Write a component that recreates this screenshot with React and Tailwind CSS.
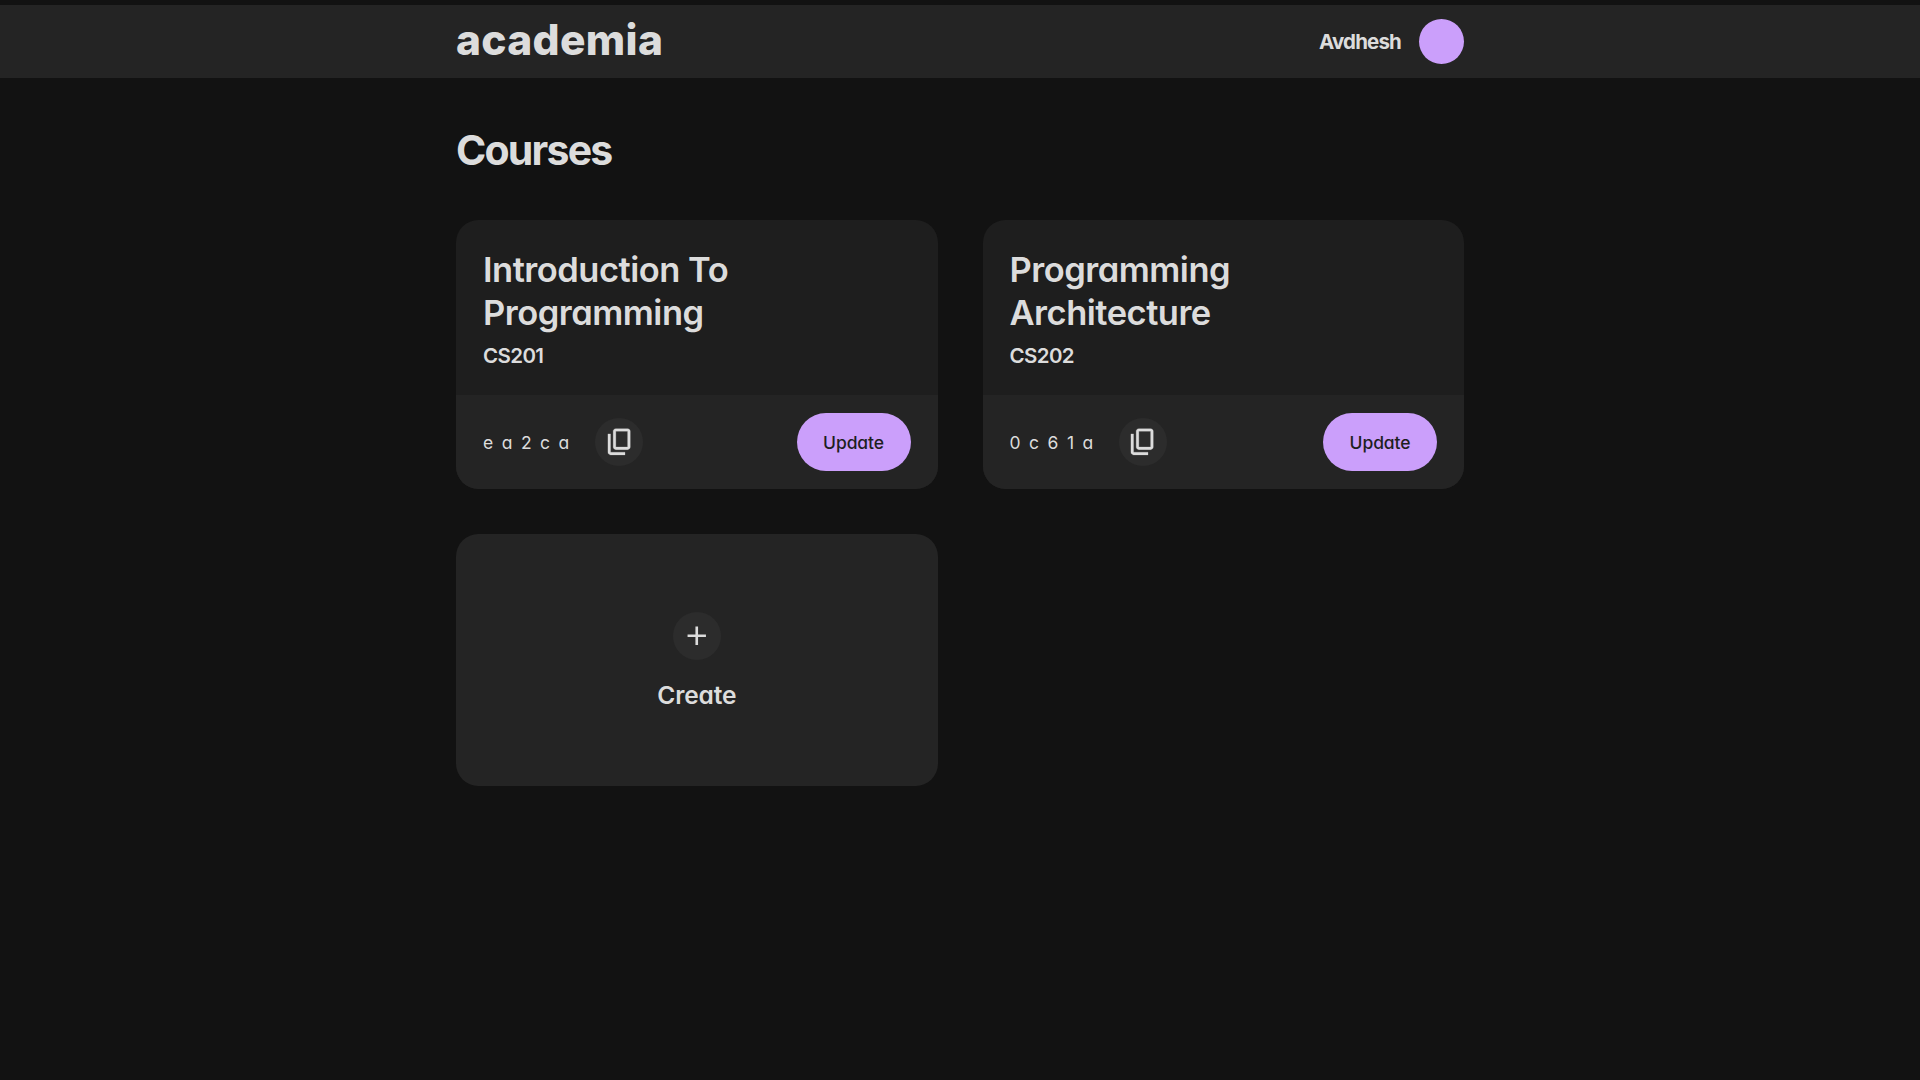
import React from 'react';

const courses = [
  { title: ['Introduction To', 'Programming'], id: 'CS201', code: 'ea2ca' },
  { title: ['Programming', 'Architecture'], id: 'CS202', code: '0c61a' },
];

function CopyIcon() {
  return (
    <svg viewBox="0 -960 960 960" className="size-[31.5px]" fill="currentColor" stroke="currentColor" strokeWidth="8">
      <path d="M360-240q-33 0-56.5-23.5T280-320v-480q0-33 23.5-56.5T360-880h360q33 0 56.5 23.5T800-800v480q0 33-23.5 56.5T720-240H360Zm0-80h360v-480H360v480ZM200-80q-33 0-56.5-23.5T120-160v-560h80v560h440v80H200Z" />
    </svg>
  );
}

function AddIcon() {
  return (
    <svg viewBox="0 -960 960 960" className="size-[31.5px]" fill="currentColor">
      <path d="M440-440H200v-80h240v-240h80v240h240v80H520v240h-80v-240Z" />
    </svg>
  );
}

function CourseCard({ title, id, code }) {
  return (
    <article className="flex h-[269px] flex-col overflow-hidden rounded-[22.5px] bg-[#1e1e1e]">
      <div className="flex-1 px-[27px] pt-7">
        <h2 className="text-[34.5px] leading-[43px] font-[560] tracking-[-0.5px]">
          {title[0]}
          <br />
          {title[1]}
        </h2>
        <p className="mt-2 text-[20.5px] leading-7 font-semibold tracking-[-0.6px]">{id}</p>
      </div>
      <div className="flex h-[94px] items-center bg-[#242424] px-[27px]">
        <span className="pt-[3px] text-[17.5px] tracking-[8.5px]">{code}</span>
        <button className="ml-[17.5px] flex size-12 items-center justify-center rounded-full bg-[#2c2c2c]">
          <CopyIcon />
        </button>
        <button className="ml-auto h-[58px] w-[114px] rounded-full bg-[#cb9ffb] pt-[3px] text-[17.5px] font-medium tracking-[-0.1px] text-[#1e1e1e]">
          Update
        </button>
      </div>
    </article>
  );
}

export default function App() {
  return (
    <div className="min-h-screen bg-[#121212] pt-[5px] font-['Inter',sans-serif] text-[#dcdcdc] [font-feature-settings:'cv11']">
      <header className="h-[73px] bg-[#242424]">
        <div className="mx-auto flex h-full w-[1008px] items-center justify-between">
          <span className="pb-0.5 text-[42.5px] leading-none font-extrabold tracking-[0.3px] [font-feature-settings:normal]">
            academia
          </span>
          <div className="flex items-center gap-[18px]">
            <span className="pt-0.5 text-[20.5px] font-bold tracking-[-0.85px]">Avdhesh</span>
            <span className="size-[45px] rounded-full bg-[#cb9ffb]" />
          </div>
        </div>
      </header>
      <main className="mx-auto w-[1008px] pt-[45px]">
        <h1 className="text-[41px] leading-[54px] font-bold tracking-[-1.8px]">Courses</h1>
        <div className="mt-[43px] grid grid-cols-2 gap-[45px]">
          {courses.map((course) => (
            <CourseCard key={course.id} {...course} />
          ))}
          <article className="flex h-[252px] flex-col items-center rounded-[22.5px] bg-[#242424] pt-[78px]">
            <button className="flex size-12 items-center justify-center rounded-full bg-[#2c2c2c]">
              <AddIcon />
            </button>
            <span className="mt-[18.5px] text-[24.5px] leading-8 font-[560] tracking-[-0.15px]">Create</span>
          </article>
        </div>
      </main>
    </div>
  );
}
